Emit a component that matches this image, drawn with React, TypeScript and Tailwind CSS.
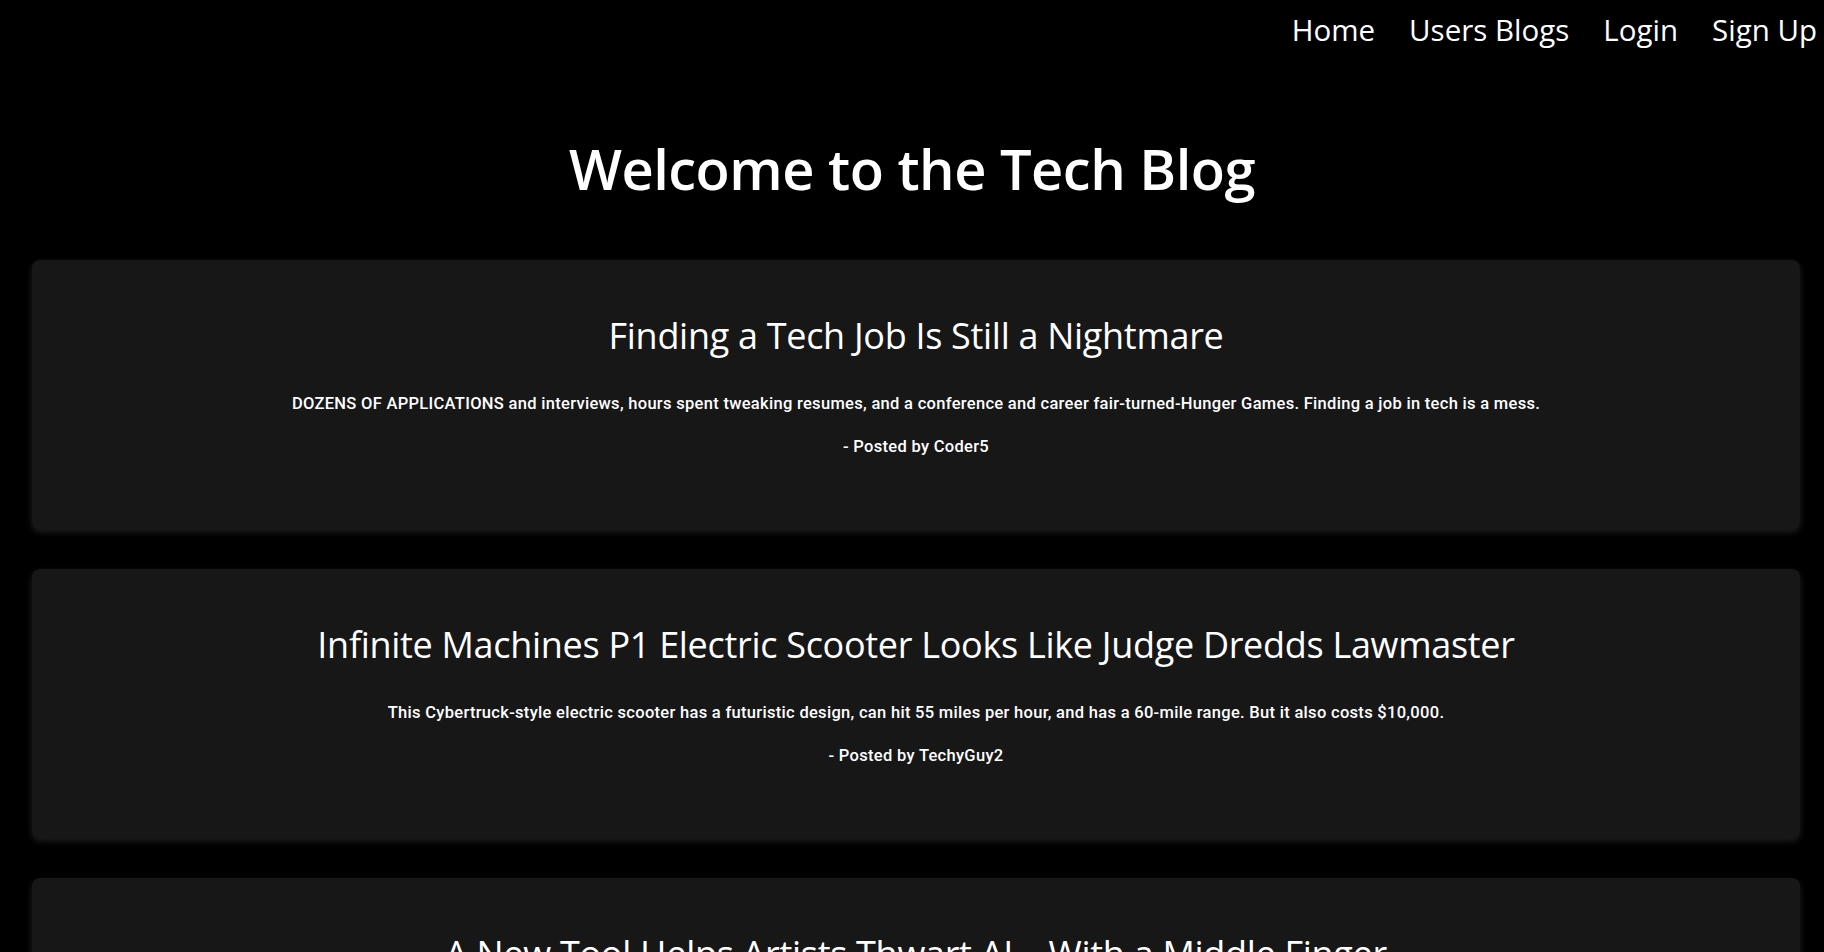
import React from 'react';

interface Post {
  id: number;
  title: string;
  body: string;
  author: string;
}

const POSTS: Post[] = [
  {
    id: 1,
    title: 'Finding a Tech Job Is Still a Nightmare',
    body: 'DOZENS OF APPLICATIONS and interviews, hours spent tweaking resumes, and a conference and career fair-turned-Hunger Games. Finding a job in tech is a mess.',
    author: 'Coder5',
  },
  {
    id: 2,
    title: 'Infinite Machines P1 Electric Scooter Looks Like Judge Dredds Lawmaster',
    body: 'This Cybertruck-style electric scooter has a futuristic design, can hit 55 miles per hour, and has a 60-mile range. But it also costs $10,000.',
    author: 'TechyGuy2',
  },
  {
    id: 3,
    title: 'A New Tool Helps Artists Thwart AI—With a Middle Finger',
    body: 'Kin.art is a free tool that lets artists show off their portfolios while keeping their work out of the training data of AI image generators.',
    author: 'Coder5',
  },
];

const NAV_LINKS = ['Home', 'Users Blogs', 'Login', 'Sign Up'];

const App: React.FC = () => {
  return (
    <div className="min-h-screen bg-black text-white font-['Open_Sans',sans-serif]">
      {/* Top navigation */}
      <nav className="flex justify-end gap-[34px] pr-[7px] pt-[8px]">
        {NAV_LINKS.map(link => (
          <a key={link} href="#" className="text-[29.5px] leading-[44px] text-white">
            {link}
          </a>
        ))}
      </nav>

      {/* Heading */}
      <h1 className="mt-[84px] text-center text-[56px] leading-[64px] font-semibold tracking-[-0.5px]">
        Welcome to the Tech Blog
      </h1>

      {/* Posts */}
      <main className="mt-[60px] ml-8 mr-6 flex flex-col gap-10 pb-10">
        {POSTS.map(post => (
          <section
            key={post.id}
            className="h-[269px] rounded-lg bg-[#181718] pt-[54px] text-center shadow-[0_3px_6px_rgba(255,255,255,0.12)]"
          >
            <h2 className="text-[36px] leading-[44px] font-medium tracking-[-0.3px]">{post.title}</h2>
            <p className="mt-[34px] text-[16.5px] leading-[24px] font-medium font-['Roboto',sans-serif] tracking-[0.3px]">
              {post.body}
            </p>
            <p className="mt-[19px] text-[16.5px] leading-[24px] font-medium font-['Roboto',sans-serif] tracking-[0.3px]">
              - Posted by {post.author}
            </p>
          </section>
        ))}
      </main>
    </div>
  );
};

export default App;
